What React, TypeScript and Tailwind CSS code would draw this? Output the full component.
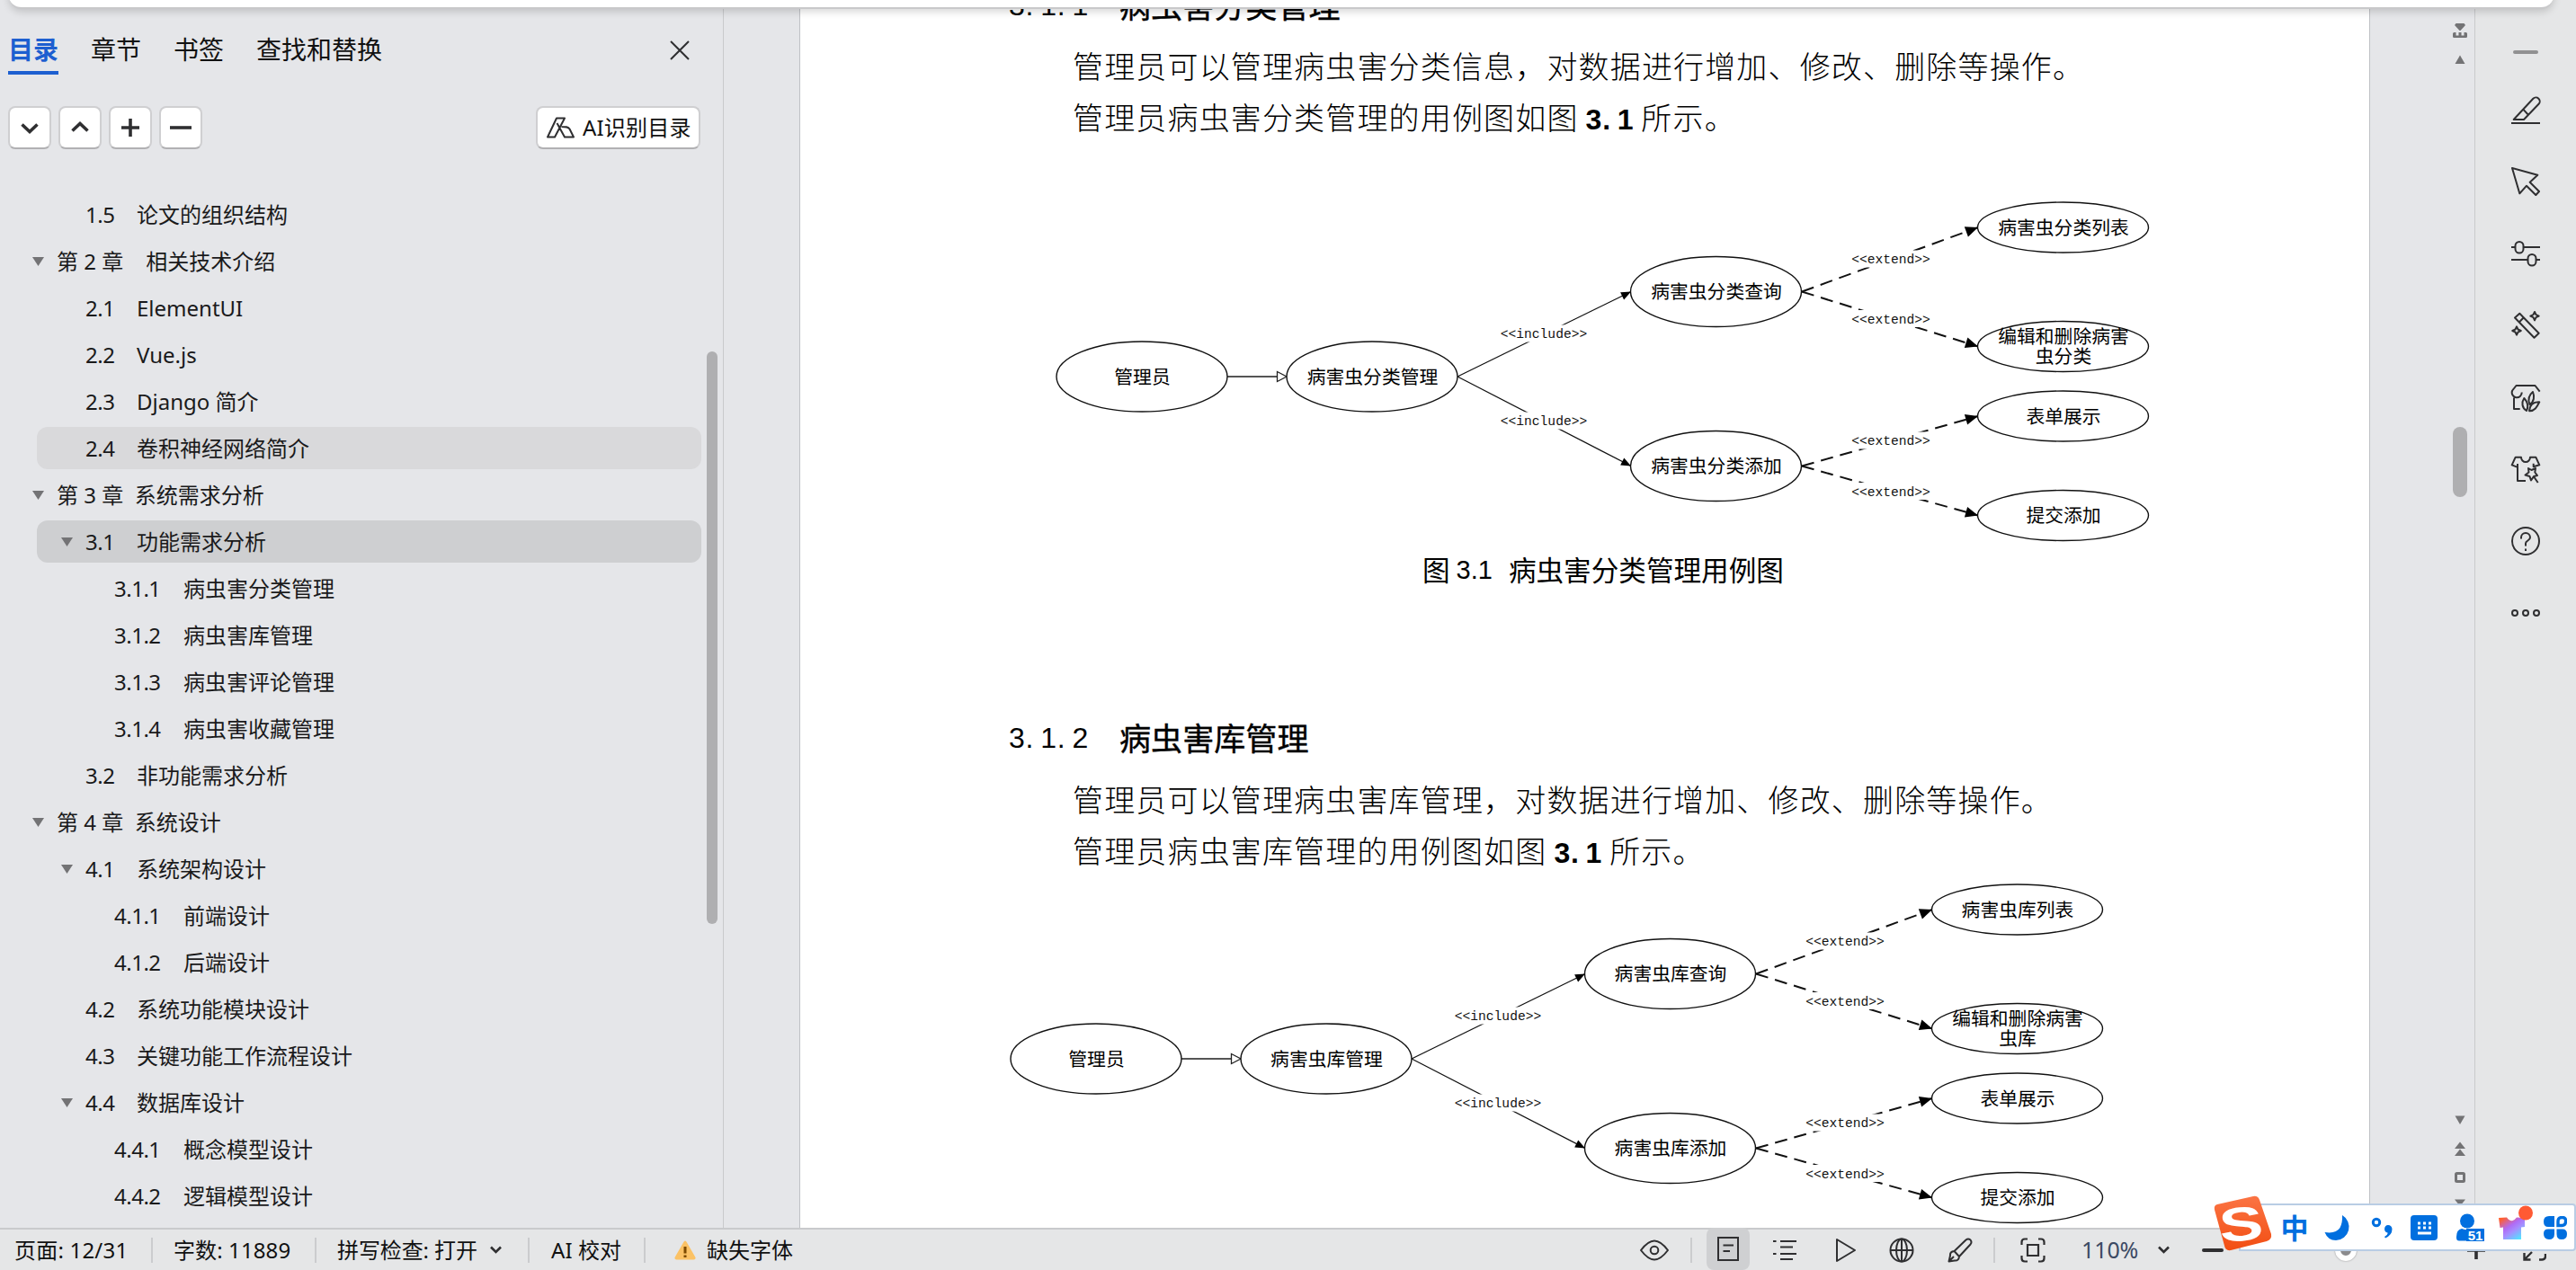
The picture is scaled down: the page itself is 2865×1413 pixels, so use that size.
import { ReactNode } from 'react';
import clsx from 'clsx';

type OutlineItem = {
  level: 1 | 2 | 3;
  no?: string;
  title: string;
  open?: boolean;
  state?: 'hover' | 'active';
};

const outline: OutlineItem[] = [
  { level: 2, no: '1.5', title: '论文的组织结构' },
  { level: 1, title: '第 2 章\u00a0\u00a0\u00a0 相关技术介绍', open: true },
  { level: 2, no: '2.1', title: 'ElementUI' },
  { level: 2, no: '2.2', title: 'Vue.js' },
  { level: 2, no: '2.3', title: 'Django 简介' },
  { level: 2, no: '2.4', title: '卷积神经网络简介', state: 'hover' },
  { level: 1, title: '第 3 章\u00a0 系统需求分析', open: true },
  { level: 2, no: '3.1', title: '功能需求分析', open: true, state: 'active' },
  { level: 3, no: '3.1.1', title: '病虫害分类管理' },
  { level: 3, no: '3.1.2', title: '病虫害库管理' },
  { level: 3, no: '3.1.3', title: '病虫害评论管理' },
  { level: 3, no: '3.1.4', title: '病虫害收藏管理' },
  { level: 2, no: '3.2', title: '非功能需求分析' },
  { level: 1, title: '第 4 章\u00a0 系统设计', open: true },
  { level: 2, no: '4.1', title: '系统架构设计', open: true },
  { level: 3, no: '4.1.1', title: '前端设计' },
  { level: 3, no: '4.1.2', title: '后端设计' },
  { level: 2, no: '4.2', title: '系统功能模块设计' },
  { level: 2, no: '4.3', title: '关键功能工作流程设计' },
  { level: 2, no: '4.4', title: '数据库设计', open: true },
  { level: 3, no: '4.4.1', title: '概念模型设计' },
  { level: 3, no: '4.4.2', title: '逻辑模型设计' },
];

const Icon = ({ children, size = 32 }: { children: ReactNode; size?: number }) => (
  <svg
    width={size}
    height={size}
    viewBox="0 0 32 32"
    fill="none"
    stroke="#2f2f31"
    strokeWidth="2"
    strokeLinejoin="round"
    className="shrink-0 overflow-visible"
  >
    {children}
  </svg>
);

const OutlineRow = ({ item }: { item: OutlineItem }) => (
  <div
    className={clsx(
      'mb-[5px] flex h-[47px] w-[739px] items-center rounded-[12px] whitespace-pre',
      item.state === 'hover' && 'bg-[#d9d9db]',
      item.state === 'active' && 'bg-[#cecfd1]',
      item.level === 1 && '-ml-[5px] pl-0',
      item.level === 2 && 'pl-[27px]',
      item.level === 3 && 'pl-[59px]',
    )}
  >
    <svg width="13" height="10" viewBox="0 0 13 10" className={clsx('shrink-0', !item.open && 'invisible')}>
      <path d="M0 0H13L6.5 10Z" fill="#737375" />
    </svg>
    {item.no && (
      <span
        className={clsx(
          'mt-[1px] ml-[14px] shrink-0 tracking-[-0.500px]',
          item.level === 2 ? 'w-[57px]' : 'w-[77px]',
        )}
      >
        {item.no}
      </span>
    )}
    <span className={clsx('mt-[1px]', !item.no && 'ml-[14px]')}>{item.title}</span>
  </div>
);

const ToolButton = ({ d }: { d: string }) => (
  <button className="flex size-[48px] items-center justify-center rounded-[8px] border-2 border-[#cfcfd1] border-b-[#b1b1b3] bg-white">
    <svg width="24" height="24" viewBox="0 0 24 24" fill="none" stroke="#2f2f31" strokeWidth="3.6">
      <path d={d} />
    </svg>
  </button>
);

const Sidebar = () => (
  <aside className="flex w-[805px] shrink-0 border-r border-[#c9cacc] bg-[#e5e6e9]">
    <div className="flex w-[786px] flex-col">
      <div className="flex h-[83px] items-end pl-[9px] text-[28px] text-[#111]">
        <div className="h-[50px] border-b-4 border-[#1d5fd0] leading-[44px] font-bold text-[#1d5fd0]">目录</div>
        <div className="ml-[36px] h-[50px] leading-[44px]">章节</div>
        <div className="ml-[36px] h-[50px] leading-[44px]">书签</div>
        <div className="ml-[36px] h-[50px] leading-[44px]">查找和替换</div>
        <svg width="22" height="22" viewBox="0 0 22 22" className="mb-[16px] ml-[320px]">
          <path d="M1 1L21 21M21 1L1 21" stroke="#2f2f31" strokeWidth="2" />
        </svg>
      </div>

      <div className="mt-[35px] flex h-[48px] gap-[8px] pl-[9px]">
        <ToolButton d="M3.5 8.5L12 16.5L20.5 8.5" />
        <ToolButton d="M3.5 15.5L12 7.5L20.5 15.5" />
        <ToolButton d="M2 12H22M12 2V22" />
        <ToolButton d="M0 12H24" />
        <button className="mr-[7px] ml-auto flex h-[48px] w-[183px] items-center rounded-[8px] border-2 border-[#cfcfd1] border-b-[#b1b1b3] bg-white pl-[10px] text-[24px] text-[#111]">
          <svg width="31" height="24" viewBox="0 0 31 24" fill="none" stroke="#2f2f31" strokeWidth="2" strokeLinejoin="round">
            <path d="M11 1.5H20L9 22.5H1ZM20 1.5L14.5 12M11.500 7L20 22.500H30L25.500 13.500C24 11 21 11 16.500 11" />
          </svg>
          <span className="ml-[9px] tracking-[0.200px] whitespace-nowrap">AI识别目录</span>
        </button>
      </div>

      <div className="mt-[49px] flex flex-col pl-[41px] text-[24px] text-[#1a1a1b]">
        {outline.map((item) => (
          <OutlineRow key={item.title + item.no} item={item} />
        ))}
      </div>
    </div>
    <div className="mt-[391px] h-[637px] w-[12px] rounded-full bg-[#afafb1]" />
  </aside>
);

// Latin run set on a half-em grid, so it lines up with the CJK text around it
const Half = ({ children, className }: { children: string; className?: string }) => (
  <span className={clsx("inline-flex font-['Liberation_Sans',sans-serif] text-[32px] tracking-normal", className)}>
    {children.split('').map((char, i) => (
      <span key={i} className={clsx('w-[17.6px]', char === '.' && 'pl-[1px]')}>
        {char}
      </span>
    ))}
  </span>
);

const Heading = ({ no, title, className }: { no: string; title: string; className?: string }) => (
  <h3 className={clsx('flex h-[40px] items-center pl-[232px] text-[35.1px] whitespace-nowrap', className)}>
    <Half className="w-[123px]">{no}</Half>
    <span className="[-webkit-text-stroke:0.4px_#000]">{title}</span>
  </h3>
);

const Body = ({ children }: { children: ReactNode }) => (
  <p className="h-[57px] pl-[303px] text-[34px] leading-[57px] font-light tracking-[1.16px] whitespace-nowrap">
    {children}
  </p>
);

const Node = ({ x, y, ry = 39, lines }: { x: number; y: number; ry?: number; lines: string[] }) => (
  <g>
    <ellipse cx={x} cy={y} rx="95" ry={ry} fill="#fff" stroke="#111" strokeWidth="1.4" />
    {lines.map((line, i) => (
      <text
        key={line}
        x={x + 0.5}
        y={y + 7.5 + (lines.length > 1 ? i * 22 - 11 : 0)}
        textAnchor="middle"
        fontSize="20.8"
        fill="#000"
      >
        {line}
      </text>
    ))}
  </g>
);

const Edge = ({ from, to, dashed }: { from: [number, number]; to: [number, number]; dashed?: boolean }) => {
  const angle = (Math.atan2(to[1] - from[1], to[0] - from[0]) * 180) / Math.PI;
  return (
    <g>
      <path
        d={`M${from[0]} ${from[1]}L${to[0]} ${to[1]}`}
        stroke="#111"
        strokeWidth={dashed ? 2 : 1.3}
        strokeDasharray={dashed ? '14 8' : undefined}
      />
      <path
        d={dashed ? 'M0 0L-14 -6V6Z' : 'M0 0L-11 -4.500V4.500Z'}
        transform={`translate(${to[0]} ${to[1]}) rotate(${angle})`}
        fill="#000"
      />
    </g>
  );
};

const EdgeLabel = ({ x, y, text }: { x: number; y: number; text: string }) => (
  <g>
    <rect x={x - text.length * 4.4} y={y - 10} width={text.length * 8.8} height="19" fill="#fff" />
    <text
      x={x}
      y={y + 4.5}
      textAnchor="middle"
      fontSize="14.6"
      className="font-['Liberation_Mono',monospace]"
      fill="#111"
    >
      {text}
    </text>
  </g>
);

const UseCaseDiagram = ({ subject, editLines, className }: { subject: string; editLines: string[]; className: string }) => (
  <svg width="1225" height="385" viewBox="1170 220 1225 385" fill="none" className={clsx('block shrink-0', className)}>
    <path d="M1365 419H1421" stroke="#555" strokeWidth="2" />
    <path d="M1420.500 413.500V424.500L1431 419Z" stroke="#222" strokeWidth="1.3" fill="#fff" />
    <Edge from={[1621, 419]} to={[1814, 324.5]} />
    <Edge from={[1621, 419]} to={[1814, 518.5]} />
    <Edge from={[2004, 324.5]} to={[2200, 253]} dashed />
    <Edge from={[2004, 324.5]} to={[2200, 385.5]} dashed />
    <Edge from={[2004, 518.5]} to={[2200, 463]} dashed />
    <Edge from={[2004, 518.5]} to={[2200, 573.5]} dashed />
    <Node x={1270} y={419} lines={['管理员']} />
    <Node x={1526} y={419} lines={[`${subject}管理`]} />
    <Node x={1908.5} y={324.5} lines={[`${subject}查询`]} />
    <Node x={1908.5} y={518.5} lines={[`${subject}添加`]} />
    <Node x={2294.5} y={253} ry={28} lines={[`${subject}列表`]} />
    <Node x={2294.5} y={385.5} ry={28} lines={editLines} />
    <Node x={2294.5} y={463} ry={28} lines={['表单展示']} />
    <Node x={2294.5} y={573.5} ry={28} lines={['提交添加']} />
    <EdgeLabel x={1717} y={371.5} text="<<include>>" />
    <EdgeLabel x={1717} y={468.5} text="<<include>>" />
    <EdgeLabel x={2103} y={288.5} text="<<extend>>" />
    <EdgeLabel x={2103} y={355} text="<<extend>>" />
    <EdgeLabel x={2103} y={490.5} text="<<extend>>" />
    <EdgeLabel x={2103} y={547} text="<<extend>>" />
  </svg>
);

const DocumentView = () => (
  <main className="flex min-w-0 flex-1 bg-[#e5e6e9]">
    <div className="ml-[84px] flex h-[1366px] w-[1747px] shrink-0 flex-col overflow-hidden border-x border-[#bfc1c5] bg-white text-black">
      <Heading no="3.1.1" title="病虫害分类管理" className="-mt-[14px] shrink-0" />
      <div className="mt-[20px]">
        <Body>管理员可以管理病虫害分类信息，对数据进行增加、修改、删除等操作。</Body>
        <Body>
          管理员病虫害分类管理的用例图如图<Half className="mr-[9px] ml-[8px] font-bold">3.1</Half>所示。
        </Body>
      </div>
      <UseCaseDiagram subject="病害虫分类" editLines={['编辑和删除病害', '虫分类']} className="mt-[60px] ml-[280px]" />
      <div className="mt-[10px] flex h-[40px] shrink-0 items-center pl-[692px] text-[30.600px] whitespace-nowrap">
        图<span className="mr-[18px] ml-[7px] font-['Liberation_Sans',sans-serif] text-[29px]">3.1</span>病虫害分类管理用例图
      </div>
      <Heading no="3.1.2" title="病虫害库管理" className="mt-[146px] shrink-0" />
      <div className="mt-[21px]">
        <Body>管理员可以管理病虫害库管理，对数据进行增加、修改、删除等操作。</Body>
        <Body>
          管理员病虫害库管理的用例图如图<Half className="mr-[9px] ml-[8px] font-bold">3.1</Half>所示。
        </Body>
      </div>
      <UseCaseDiagram subject="病害虫库" editLines={['编辑和删除病害', '虫库']} className="mt-[3px] ml-[229px]" />
    </div>

    {/* vertical scroll bar with page navigation */}
    <div className="ml-auto flex w-[33px] flex-col items-center border-r border-[#c9cacc]">
      <svg width="16" height="1366" viewBox="0 0 16 1366" fill="#737375">
        <path d="M3.500 26H12.500L14 28L8.500 34H7.500L2 28ZM0 37.500Q0 36 1.500 36H3.500V39.500H6.500V36H9.500V39.500H12.500V36H14.500Q16 36 16 37.500V40.500Q16 42 14.500 42H1.500Q0 42 0 40.500Z" />
        <path d="M8 61.500L13.500 71H2.500Z" />
        <rect y="475" width="16" height="78" rx="8" fill="#afafb1" />
        <path d="M2.500 1241.500H13.500L8 1251Z" />
        <path d="M8 1270.500L14 1278H2ZM8 1278.500L14 1286H2Z" />
        <rect x="3.500" y="1305.500" width="9" height="9" rx="1" fill="none" stroke="#737375" strokeWidth="3" />
        <path d="M2 1334.500H14L8 1342Z" />
      </svg>
    </div>
  </main>
);

const star = (x: number, y: number) =>
  `M${x} ${y - 4.7}L${x + 1.5} ${y - 1.5}L${x + 4.7} ${y}L${x + 1.5} ${y + 1.5}L${x} ${y + 4.7}L${x - 1.5} ${y + 1.5}L${x - 4.7} ${y}L${x - 1.5} ${y - 1.5}Z`;

const ToolRail = () => (
  <aside className="flex w-[112px] shrink-0 flex-col items-center gap-[48px] bg-[#e5e6e7] pt-[56px]">
    <div className="-mb-[2px] h-[4px] w-[28px] rounded-full bg-[#919192]" />
    <Icon>
      <path d="M2.700 27L24.300 3.800A4.200 4.200 0 0 1 30.500 9.800L14 27ZM13.500 15.800L18.700 21.500M0 31H32" />
    </Icon>
    <Icon>
      <path d="M1 1L29.300 8.700L20.700 16.700L31 27L27.300 31L17 20.700L9.300 29.300Z" />
    </Icon>
    <Icon>
      <rect x="4.500" y="3" width="9" height="12.500" rx="4.500" />
      <rect x="18.500" y="17" width="9" height="12.500" rx="4.500" />
      <path d="M0 9H4.500M13.500 9H32M0 23H18.500M27.500 23H32" />
    </Icon>
    <Icon>
      <path d="M4 7.500L9.300 2.700L30.700 24.700L25.500 29.700ZM8.800 12.500L13.800 7.200" />
      <path d={star(26, 5.7)} />
      <path d={star(6, 22)} />
    </Icon>
    <Icon>
      <path d="M31.700 9.700L26.500 3H5.500L1.200 8.500A5.500 5.500 0 1 0 11.700 10.500M3 16.500V29H9.700" />
      <path d="M14.300 17C11 22 12 28 17 31C19.500 26 18 21 14.300 17ZM24 10C19 14 18.500 19 20.500 24C25.500 21 26 15 24 10ZM31.300 21.300C24 21 20.500 25 20 31.200C26 31.500 28.500 27 31.300 21.300Z" />
    </Icon>
    <Icon>
      <path d="M24.700 9.700V13.300L31.300 11.300L27.300 2.700H21A5 5.300 0 0 1 11 2.700H4.700L0.700 11.300L6.500 13.700M7 10V29H16" />
      <path d="M19 15L22.500 17L27 15L26.300 19.500L29 23L25 24L22 28.500L20.500 24L15.500 22.500L19.500 19.500ZM25.500 25L29.700 31" />
    </Icon>
    <Icon>
      <circle cx="16" cy="16" r="15" />
      <path d="M11 13.500V12A5 5 0 0 1 21 12C21 15.500 16 15.500 16 18.500V21.500M16 24.500V27" />
    </Icon>
    <Icon>
      <circle cx="4" cy="16" r="3" />
      <circle cx="16" cy="16" r="3" />
      <circle cx="28" cy="16" r="3" />
    </Icon>
  </aside>
);

const Divider = ({ className }: { className?: string }) => (
  <div className={clsx('h-[28px] w-[2px] shrink-0 bg-[#cbccce]', className)} />
);

const Chevron = ({ className }: { className?: string }) => (
  <svg width="13" height="9" viewBox="0 0 13 9" fill="none" className={clsx('shrink-0', className)}>
    <path d="M1 1.500L6.500 7L12 1.500" stroke="#2f2f31" strokeWidth="2.600" />
  </svg>
);

const StatusBar = () => (
  <footer className="flex h-[47px] shrink-0 items-center border-t-2 border-[#c9cacc] bg-[#e5e6e7] pl-[16px] text-[24px] whitespace-nowrap text-[#111]">
    <div className="w-[152px] tracking-[0.200px]">页面: 12/31</div>
    <Divider />
    <div className="ml-[23px] w-[157px] tracking-[0.100px]">字数: 11889</div>
    <Divider />
    <div className="ml-[23px] w-[170px] tracking-[-0.100px]">拼写检查: 打开</div>
    <Chevron className="mr-[29px]" />
    <Divider />
    <div className="ml-[24px] w-[103px] tracking-[0.100px]">AI 校对</div>
    <Divider />
    <svg width="24" height="22" viewBox="0 0 24 22" className="ml-[32px] shrink-0">
      <path d="M12 0.500Q13 0.500 14 2.500L23.500 19Q24 21.500 21.500 21.500H2.500Q0 21.500 0.500 19L10 2.500Q11 0.500 12 0.500Z" fill="#fbc265" />
      <path d="M12 7V14.500M12 16.500V19" stroke="#7d4a00" strokeWidth="3" />
    </svg>
    <div className="ml-[12px]">缺失字体</div>

    <div className="ml-auto flex h-[45px] w-[1041px] items-center">
      <Icon>
        <path d="M1 16Q9 5.500 16 5.500T31 16Q23 26.500 16 26.500T1 16Z" />
        <circle cx="16" cy="16" r="4.300" />
      </Icon>
      <Divider className="ml-[24px]" />
      <div className="-mt-[2px] ml-[16px] flex h-[47px] w-[48px] items-center justify-center rounded-[8px] bg-[#cfd0d2]">
        <svg width="24" height="27" viewBox="0 0 24 27" fill="none" stroke="#2f2f31" strokeWidth="2">
          <path d="M1 1H23V26H1ZM6.500 9.500H18M6.500 16H14" />
        </svg>
      </div>
      <svg width="26" height="24" viewBox="0 0 26 24" fill="none" stroke="#2f2f31" strokeWidth="2.200" className="ml-[26px]">
        <path d="M0 2H3.500M0 16H3.500M8 2H26M8 8.500H22M8 16H26M8 22H22" />
      </svg>
      <svg width="23" height="28" viewBox="0 0 23 28" fill="none" stroke="#2f2f31" strokeWidth="2" strokeLinejoin="round" className="ml-[43px]">
        <path d="M2 2V26L22 14Z" />
      </svg>
      <svg width="28" height="28" viewBox="0 0 28 28" fill="none" stroke="#2f2f31" strokeWidth="2" className="ml-[37px]">
        <circle cx="14" cy="14" r="12.500" />
        <ellipse cx="14" cy="14" rx="6" ry="12.500" />
        <path d="M1.500 14H26.500M14 1.500V26.500" />
      </svg>
      <svg width="28" height="28" viewBox="0 0 28 28" fill="none" stroke="#2f2f31" strokeWidth="2" strokeLinejoin="round" className="ml-[37px]">
        <path d="M7.500 15L20.500 2.500Q23 0.500 25.500 2.500Q27.500 5 25.500 7.500L13 21M7.500 15Q2.500 15.500 3 20L1.500 26.500L8 25.500Q12.500 26 13 21ZM1.500 26.500L7 21" />
      </svg>
      <Divider className="ml-[23px]" />
      <svg width="28" height="28" viewBox="0 0 28 28" fill="none" stroke="#2f2f31" strokeWidth="2.200" className="ml-[28px]">
        <path d="M1.500 8V5Q1.500 1.500 5 1.500H8M20 1.500H23Q26.500 1.500 26.500 5V8M26.500 20V23Q26.500 26.500 23 26.500H20M8 26.500H5Q1.500 26.500 1.500 23V20M8 8H20V20H8Z" />
      </svg>
      <span className="ml-[40px] w-[85px] text-[25px] tracking-[-0.100px] text-[#3c4a63]">110%</span>
      <Chevron />
      <div className="ml-[36px] h-[4px] w-[24px] rounded-full bg-[#2f2f31]" />
      <div className="relative ml-[29px] h-[2px] w-[211px] bg-[#a9b3c1]">
        <div className="h-[2px] w-[107px] bg-[#1d5fd0]" />
        <div className="absolute -top-[11px] left-[95px] size-[24px] rounded-full border-[6px] border-white bg-[#8b8b8d] shadow-[0_0_2px_#888]" />
      </div>
      <svg width="20" height="20" viewBox="0 0 20 20" className="ml-[31px]">
        <path d="M0 10H20M10 0V20" stroke="#2f2f31" strokeWidth="3.600" />
      </svg>
      <svg width="26" height="24" viewBox="0 0 26 24" fill="none" stroke="#2f2f31" strokeWidth="2.400" className="ml-[42px]">
        <path d="M1.500 15V22.500H8.500M1.500 22.500L10 14M18 22.500H21Q25 22.500 25 18.500V16M8 1.500H5Q1.500 1.500 1.500 5V8M17 1.500H24.500V8M24.500 1.500L16 10" />
      </svg>
    </div>
  </footer>
);

// Floating input method toolbar, sits over the status bar
const ImeBar = () => (
  <div className="absolute top-[1339px] left-[2490px] flex h-[53px] w-[375px] items-center rounded-r-[4px] border-2 border-[#b9cde4] bg-white text-[#006fdf]">
    <svg width="66" height="64" viewBox="0 0 66 64" className="absolute -top-[12px] -left-[31px]">
      <defs>
        <linearGradient id="ime-logo" x1="0" y1="0" x2="0" y2="1">
          <stop offset="0" stopColor="#fb7444" />
          <stop offset="1" stopColor="#f24e13" />
        </linearGradient>
      </defs>
      <path d="M5 11L45 2Q50 1 52 6L65 44Q66 50 60 52L20 62Q14 63 13 57L2 17Q1 12 5 11Z" fill="url(#ime-logo)" />
      <text
        x="0"
        y="0"
        textAnchor="middle"
        transform="translate(33 51) rotate(-5) scale(1.38 1)"
        fontSize="53"
        fontWeight="700"
        fill="#fff"
        className="font-['Liberation_Sans',sans-serif]"
      >
        S
      </text>
    </svg>
    <span className="ml-[44px] w-[32px] text-center text-[31px] leading-[48px] font-bold">中</span>
    <svg width="30" height="30" viewBox="0 0 30 30" fill="#006fdf" className="ml-[17px]">
      <path d="M20 1A15 15 0 0 1 13 29Q4 29 0.500 20Q13 22 17.500 15Q20.500 9 20 1Z" />
    </svg>
    <svg width="24" height="24" viewBox="0 0 24 24" className="ml-[22px]">
      <circle cx="6" cy="6" r="3.700" fill="none" stroke="#006fdf" strokeWidth="3" />
      <path d="M19 9A4.500 4.500 0 0 1 23.500 13.500Q23.500 20 16 23.500L15 22Q19 19.500 18.500 17.500A4.300 4.300 0 0 1 19 9Z" fill="#006fdf" />
    </svg>
    <svg width="30" height="28" viewBox="0 0 30 28" className="ml-[20px]">
      <rect width="30" height="28" rx="4" fill="#006fdf" />
      <path d="M8 9H23M8 14H23" stroke="#fff" strokeWidth="3" strokeDasharray="3 3" />
      <path d="M8 20H23" stroke="#fff" strokeWidth="3" />
    </svg>
    <svg width="31" height="31" viewBox="0 0 31 31" className="ml-[21px]">
      <circle cx="12" cy="8.500" r="8" fill="#006fdf" />
      <path d="M0 26Q0 18 6 17Q12 19.500 19 17L24 24V30.500H3Q0 30.500 0 27Z" fill="#006fdf" />
      <rect x="11" y="17" width="20" height="14" fill="#006fdf" />
      <text x="21" y="29.500" textAnchor="middle" fontSize="15" fontWeight="700" fill="#fff" className="font-['Liberation_Sans',sans-serif]">
        51
      </text>
    </svg>
    <svg width="38" height="39" viewBox="0 0 38 39" className="-mt-[10px] ml-[16px]">
      <defs>
        <linearGradient id="ime-shirt" x1="0" y1="0" x2="0.8" y2="1">
          <stop offset="0.100" stopColor="#ff5f2e" />
          <stop offset="0.450" stopColor="#b06bf5" />
          <stop offset="0.650" stopColor="#a590ff" />
          <stop offset="1" stopColor="#4fe6ff" />
        </linearGradient>
      </defs>
      <path d="M0 14L9 13.500Q14.500 21 20 13.500L29 14V24L25 24.500V38H5V24.500L1.500 25Z" fill="url(#ime-shirt)" />
      <circle cx="30" cy="8.500" r="8" fill="#ff5a33" />
    </svg>
    <svg width="26" height="26" viewBox="0 0 26 26" fill="#006fdf" className="ml-[12px]">
      <path d="M6 0H12V12H5Q0 12 0 6Q0 0 6 0ZM0 19.500Q0 14.500 5 14.500H12V20Q12 26 6 26Q0 26 0 19.500ZM14.500 14.500H21Q26 14.500 26 20Q26 26 20 26Q14.500 26 14.500 20Z" />
      <path d="M16 6Q16 1.500 20.500 1.500T24.500 6Q24.500 10.500 20.500 10.500H16Z" fill="none" stroke="#006fdf" strokeWidth="3.400" />
    </svg>
  </div>
);

export default function App() {
  return (
    <div className="relative flex h-[1413px] w-[2865px] flex-col overflow-hidden bg-[#e5e6e9] font-['Noto_Sans','Noto_Sans_CJK_SC',sans-serif]">
      <div className="flex h-[1366px] shrink-0">
        <Sidebar />
        <DocumentView />
        <ToolRail />
      </div>
      <StatusBar />
      {/* bottom edge of the ribbon */}
      <div className="absolute -top-[20px] left-[10px] h-[30px] w-[2830px] rounded-b-[14px] border-b-2 border-[#c8c8ca] bg-white shadow-[0_3px_8px_rgba(0,0,0,0.16)]" />
      <ImeBar />
    </div>
  );
}
